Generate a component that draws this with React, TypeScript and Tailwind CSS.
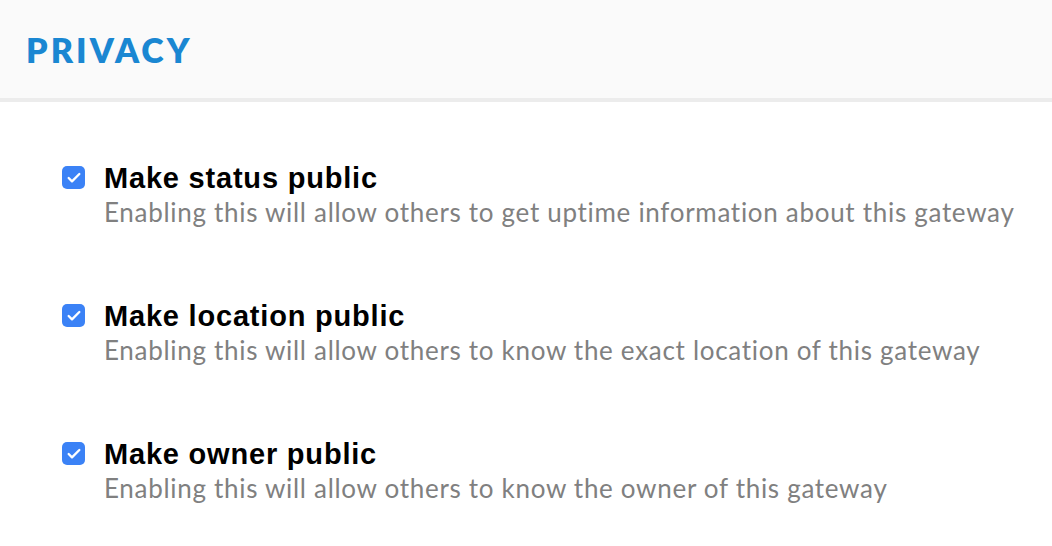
import { Check } from 'lucide-react';

const rows = [
  { title: 'Make status public', desc: 'Enabling this will allow others to get uptime information about this gateway' },
  { title: 'Make location public', desc: 'Enabling this will allow others to know the exact location of this gateway' },
  { title: 'Make owner public', desc: 'Enabling this will allow others to know the owner of this gateway' },
];

function Checkbox() {
  return (
    <span className="mt-[4px] flex h-[23px] w-[23px] shrink-0 items-center justify-center rounded-[5px] bg-[#3b82f6]">
      <Check className="h-[16px] w-[16px] text-white" strokeWidth={3.5} />
    </span>
  );
}

export default function App() {
  return (
    <div className="h-[546px] w-[1052px] overflow-hidden bg-white">
      <div className="flex h-[102px] items-center border-b-[4px] border-[#ececec] bg-[#fafafa] px-[26px]">
        <h1
          className="text-[34px] font-extrabold tracking-[0.09em] text-[#1a87d2]"
          style={{ fontFamily: '"Futura", "Lato", "Open Sans", sans-serif' }}
        >
          PRIVACY
        </h1>
      </div>
      <div className="flex flex-col gap-[70px] pl-[62px] pt-[60px]">
        {rows.map((r) => (
          <label key={r.title} className="flex gap-[19px]">
            <Checkbox />
            <div className="flex flex-col">
              <span
                className="text-[29px] font-bold leading-[32px] tracking-[0.8px] text-black"
                style={{ fontFamily: '"Liberation Sans", Arial, sans-serif' }}
              >
                {r.title}
              </span>
              <span
                className="text-[26px] leading-[36px] tracking-[0.7px] text-[#808080]"
                style={{ fontFamily: 'Lato, sans-serif' }}
              >
                {r.desc}
              </span>
            </div>
          </label>
        ))}
      </div>
    </div>
  );
}
